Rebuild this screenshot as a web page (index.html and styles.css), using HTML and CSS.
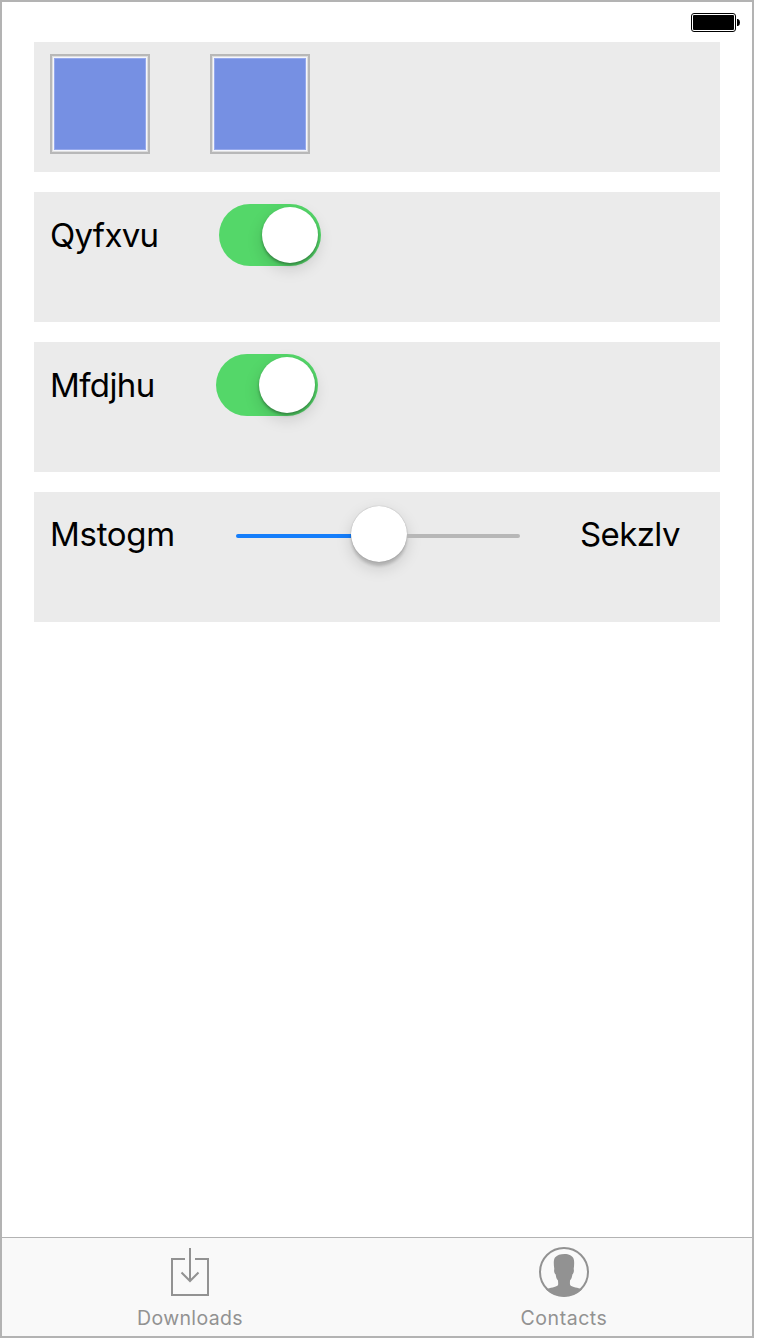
FILE: index.html
```html
<!DOCTYPE html>
<html lang="en">
<head>
<meta charset="utf-8">
<title>Settings</title>
<link rel="stylesheet" href="styles.css">
</head>
<body>
<div class="screen">
  <header class="status">
    <svg class="battery" width="49" height="19" viewBox="0 0 49 19">
      <rect x=".5" y=".5" width="44" height="18" rx="2.5" fill="#fff" stroke="#000"/>
      <rect x="2" y="2" width="41" height="15" rx="1" fill="#000"/>
      <path d="M46 6h1q2 .6 2 3.500t-2 3.500h-1z" fill="#000"/>
    </svg>
  </header>
  <main class="panels">
    <section class="panel tiles">
      <div class="tile"></div>
      <div class="tile"></div>
    </section>
    <section class="panel">
      <span class="label label-first">Qyfxvu</span>
      <div class="switch"><div class="knob"></div></div>
    </section>
    <section class="panel">
      <span class="label label-second">Mfdjhu</span>
      <div class="switch"><div class="knob"></div></div>
    </section>
    <section class="panel">
      <span class="label label-min">Mstogm</span>
      <div class="slider">
        <div class="track filled"></div>
        <div class="knob slider-knob"></div>
        <div class="track"></div>
      </div>
      <span class="label label-max">Sekzlv</span>
    </section>
  </main>
  <nav class="tabs">
    <a class="tab">
      <svg width="50" height="50" viewBox="0 0 50 50" fill="none" stroke="#929292" stroke-width="2">
        <path d="M20 12H7v36h36V12H30M25 1v33M16.500 25.500l8.500 8.500 8.500-8.500"/>
      </svg>
      <span class="tab-text downloads">Downloads</span>
    </a>
    <a class="tab">
      <svg width="50" height="50" viewBox="0 0 50 50">
        <circle cx="25" cy="25" r="24" fill="none" stroke="#929292" stroke-width="2"/>
        <path d="M7 42.500C11 40.500 17 40.300 18.700 38.500C19.600 37.500 19 35.500 19 33.500C17.500 32 17 30 16.700 27.500C15.200 26.500 14.800 23.500 15.300 22C14.500 17 14.500 12.500 16 10.500C18 8 21.500 7 25.500 7C30 7 33.500 9 34.500 11.500C35.500 14 35.200 18.500 34.700 22C35.300 24 34.600 26.500 33.400 27.500C33 30 32.500 32 31 33.500C31 35.500 30.600 37.500 31.500 38.500C33.200 40.300 39 40.500 43 42.500C33 51.500 17 51.500 7 42.500Z" fill="#929292"/>
      </svg>
      <span class="tab-text contacts">Contacts</span>
    </a>
  </nav>
</div>
</body>
</html>
```
FILE: styles.css
```css
* { box-sizing: border-box; }
body {
  margin: 0;
  background: #fff;
  color: #000;
  font-family: Inter, "Liberation Sans", sans-serif;
}
.screen {
  display: flex;
  flex-direction: column;
  width: 754px;
  height: 1338px;
  border: 2px solid #b3b3b3;
}
.status {
  display: flex;
  justify-content: flex-end;
  height: 40px;
  padding: 11px 12px 0 0;
}
.panels {
  display: flex;
  flex: 1;
  flex-direction: column;
  gap: 20px;
  padding: 0 32px;
}
.panel {
  display: flex;
  align-items: flex-start;
  height: 130px;
  padding: 12px 16px;
  background: #ebebeb;
}
.tiles { gap: 60px; }
.tile {
  width: 100px;
  height: 100px;
  border: 2px solid #b8b8b8;
  background: #7690e3;
  box-shadow: inset 0 0 0 1px #dedede, inset 0 0 0 2px #f5f6fc, inset 0 0 0 3px #95a8ec;
}
.label {
  font-size: 33px;
  line-height: 63px;
  white-space: nowrap;
}
.label-first { width: 169px; letter-spacing: -.7px; }
.label-second { width: 166px; letter-spacing: -.6px; }
.label-min { width: 186px; line-height: 61px; letter-spacing: -.3px; }
.label-max { line-height: 61px; margin-left: 60px; letter-spacing: -.6px; }
.switch {
  display: flex;
  justify-content: flex-end;
  width: 102px;
  height: 62px;
  padding: 3px;
  border-radius: 31px;
  background: #54d769;
}
.knob {
  flex: none;
  width: 56px;
  height: 56px;
  border-radius: 50%;
  background: #fff;
  box-shadow: 0 6px 16px rgba(0, 0, 0, .15), 0 2px 3px rgba(0, 0, 0, .32);
}
.slider {
  display: flex;
  align-items: center;
  width: 284px;
  height: 64px;
}
.slider-knob {
  margin-top: -4px;
  box-shadow: 0 6px 16px rgba(0, 0, 0, .15), 0 4px 3px rgba(0, 0, 0, .16), 0 0 1px rgba(0, 0, 0, .35);
}
.track {
  flex: 1;
  height: 4px;
  border-radius: 0 2px 2px 0;
  background: #b7b7b7;
}
.filled {
  flex: none;
  width: 115px;
  border-radius: 2px 0 0 2px;
  background: #157efb;
}
.tabs {
  display: grid;
  grid-template-columns: 376px 372px;
  height: 99px;
  border-top: 1px solid #b3b3b3;
  background: #f9f9f9;
}
.tab {
  display: flex;
  flex-direction: column;
  align-items: center;
  padding-top: 9px;
  color: #929292;
}
.tab-text {
  margin-top: 9px;
  font-size: 19.5px;
  line-height: 24px;
}
.downloads { letter-spacing: .35px; }
.contacts { letter-spacing: .55px; }
```
